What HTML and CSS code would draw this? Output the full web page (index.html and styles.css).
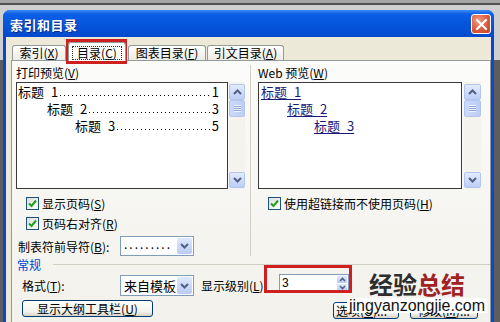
FILE: index.html
```html
<!DOCTYPE html>
<html lang="zh-CN">
<head>
  <meta charset="UTF-8" />
  <title>索引和目录</title>
  <link rel="stylesheet" href="styles.css">
</head>
<body>
  <div class="window">
    <div class="titlebar">
      <span class="title">索引和目录</span>
      <span class="close">
        <svg width="13" height="13" viewBox="0 0 13 13"><path d="M2 2 L11 11 M11 2 L2 11" stroke="#fff" stroke-width="2.2" stroke-linecap="round"/></svg>
      </span>
    </div>

    <div class="client">
      <div class="tabs">
        <div class="tab tab-index">索引(<u>X</u>)</div>
        <div class="tab tab-toc active"><span class="focus">目录(<u>C</u>)</span></div>
        <div class="tab tab-fig">图表目录(<u>F</u>)</div>
        <div class="tab tab-cite">引文目录(<u>A</u>)</div>
      </div>

      <div class="panel">
        <div class="previews">
          <div class="col col-print">
            <div class="label">打印预览(<u>V</u>)</div>
            <div class="preview-row">
              <div class="preview print-box">
                <div class="toc-line lvl1"><span>标题 1</span><span class="dots"></span><span>1</span></div>
                <div class="toc-line lvl2"><span>标题 2</span><span class="dots"></span><span>3</span></div>
                <div class="toc-line lvl3"><span>标题 3</span><span class="dots"></span><span>5</span></div>
              </div>
              <div class="scrollbar">
                <div class="sb-btn"><svg width="9" height="6" viewBox="0 0 9 6"><path d="M1 5 L4.5 1.5 L8 5" stroke="#4d6185" stroke-width="2" fill="none"/></svg></div>
                <div class="sb-thumb"></div>
                <div class="sb-track"></div>
                <div class="sb-btn"><svg width="9" height="6" viewBox="0 0 9 6"><path d="M1 1 L4.5 4.5 L8 1" stroke="#4d6185" stroke-width="2" fill="none"/></svg></div>
              </div>
            </div>
            <label class="check first"><span class="box"><svg width="9" height="9" viewBox="0 0 9 9"><path d="M1 4.5 L3.5 7 L8 1.5" stroke="#21a121" stroke-width="2" fill="none"/></svg></span>显示页码(<u>S</u>)</label>
            <label class="check"><span class="box"><svg width="9" height="9" viewBox="0 0 9 9"><path d="M1 4.5 L3.5 7 L8 1.5" stroke="#21a121" stroke-width="2" fill="none"/></svg></span>页码右对齐(<u>R</u>)</label>
            <div class="field">
              <span class="field-label">制表符前导符(<u>B</u>):</span>
              <div class="select">
                <span class="select-text leader">.........</span>
                <span class="select-btn"><svg width="9" height="6" viewBox="0 0 9 6"><path d="M1 1 L4.5 4.5 L8 1" stroke="#4d6185" stroke-width="2" fill="none"/></svg></span>
              </div>
            </div>
          </div>

          <div class="col col-web">
            <div class="label">Web 预览(<u>W</u>)</div>
            <div class="preview-row">
              <div class="preview web-box">
                <div class="web-line lvl1"><a>标题 1</a></div>
                <div class="web-line lvl2"><a>标题 2</a></div>
                <div class="web-line lvl3"><a>标题 3</a></div>
              </div>
              <div class="scrollbar wide">
                <div class="sb-btn"><svg width="9" height="6" viewBox="0 0 9 6"><path d="M1 5 L4.5 1.5 L8 5" stroke="#4d6185" stroke-width="2" fill="none"/></svg></div>
                <div class="sb-thumb"></div>
                <div class="sb-track"></div>
                <div class="sb-btn"><svg width="9" height="6" viewBox="0 0 9 6"><path d="M1 1 L4.5 4.5 L8 1" stroke="#4d6185" stroke-width="2" fill="none"/></svg></div>
              </div>
            </div>
            <label class="check first"><span class="box"><svg width="9" height="9" viewBox="0 0 9 9"><path d="M1 4.5 L3.5 7 L8 1.5" stroke="#21a121" stroke-width="2" fill="none"/></svg></span>使用超链接而不使用页码(<u>H</u>)</label>
          </div>
        </div>

        <div class="group-title"><span>常规</span><span class="rule"></span></div>

        <div class="format-row">
          <span class="format-label">格式(<u>T</u>):</span>
          <div class="select big">
            <span class="select-text">来自模板</span>
            <span class="select-btn"><svg width="9" height="6" viewBox="0 0 9 6"><path d="M1 1 L4.5 4.5 L8 1" stroke="#4d6185" stroke-width="2" fill="none"/></svg></span>
          </div>
          <span class="level-label">显示级别(<u>L</u>):</span>
          <div class="spinner">
            <span class="spin-value">3</span>
            <span class="spin-btns">
              <span class="spin-btn"><svg width="7" height="5" viewBox="0 0 7 5"><path d="M1 4 L3.5 1.5 L6 4" stroke="#4d6185" stroke-width="1.6" fill="none"/></svg></span>
              <span class="spin-btn"><svg width="7" height="5" viewBox="0 0 7 5"><path d="M1 1 L3.5 3.5 L6 1" stroke="#4d6185" stroke-width="1.6" fill="none"/></svg></span>
            </span>
          </div>
        </div>

        <div class="button-row">
          <button class="btn outline-btn">显示大纲工具栏(<u>U</u>)</button>
          <button class="btn options-btn">选项(<u>O</u>)...</button>
          <button class="btn modify-btn">修改(<u>M</u>)...</button>
        </div>
      </div>
    </div>
  </div>

  <div class="highlight hl-tab"></div>
  <div class="highlight hl-spin"></div>

  <div class="wm-cn"><span class="wm-dark">经验</span><span class="wm-red">总结</span></div>
  <div class="wm-url">jingyanzongjie.com</div>
</body>
</html>
```

FILE: styles.css
```css
* {
  box-sizing: border-box;
}

body {
  margin: 0;
  width: 500px;
  height: 322px;
  overflow: hidden;
  position: relative;
  font-family: "Noto Sans CJK SC", "Liberation Sans", sans-serif;
  font-size: 12px;
  color: #000;
  white-space: nowrap;
  background: linear-gradient(#a4a4a4 0 3px, #505050 3px 5px, #cfcfcf 5px 60px, #5d5d5d 60px);
}

u {
  text-decoration: underline;
  text-underline-offset: 1px;
}

.window {
  margin: 10px 0 0 3px;
  width: 491px;
  height: 312px;
  background: #0a46d2;
  border-radius: 7px 7px 0 0;
  display: flex;
  flex-direction: column;
}

.titlebar {
  height: 27px;
  display: flex;
  align-items: center;
  justify-content: space-between;
  padding: 1px 3px 0 7px;
  border-radius: 7px 7px 0 0;
  background: linear-gradient(#3d8cf8 0, #0c5fe6 4px, #0657dd 45%, #0449cd 100%);
}

.title {
  color: #fff;
  font-weight: bold;
  font-size: 13px;
  letter-spacing: 0.5px;
  text-shadow: 1px 1px 0 #0a2a80;
}

.close {
  width: 20px;
  height: 20px;
  border: 1px solid #fff;
  border-radius: 3px;
  background: radial-gradient(circle at 35% 30%, #f09a7c, #d8573a 60%, #c4452a);
  display: flex;
  align-items: center;
  justify-content: center;
}

.client {
  flex: 1;
  margin: 0 3px;
  background: #ece9d8;
  padding: 5px 0 0 5px;
  overflow: hidden;
}

/* tabs */
.tabs {
  display: flex;
  align-items: flex-end;
  height: 18px;
  margin-left: 1px;
  position: relative;
  z-index: 1;
}

.tab {
  height: 15px;
  line-height: 14px;
  border: 1px solid #919b9c;
  border-bottom: none;
  border-radius: 3px 3px 0 0;
  background: linear-gradient(#ffffff, #ecebe4);
  text-align: center;
  margin-right: 2px;
}

.tab-index { width: 54px; }
.tab-toc { width: 58px; }
.tab-fig { width: 78px; margin-right: 1px; }
.tab-cite { width: 77px; }

.tab.active {
  height: 19px;
  margin-bottom: -1px;
  padding-top: 3px;
  background: #fcfcfb;
}

.focus {
  display: inline-block;
  line-height: 12px;
  padding: 0 4px;
  outline: 1px dotted #333;
}

.panel {
  border: 1px solid #919b9c;
  background: linear-gradient(#fbfbf9, #f1f0ea);
  height: 300px;
  padding: 4px 0 0 4px;
}

/* previews */
.previews {
  display: flex;
}

.col-print {
  width: 234px;
}

.col-web {
  width: 238px;
  border-left: 1px solid #d3d0c3;
  padding-left: 7px;
}

.label {
  height: 16px;
  line-height: 16px;
  margin-bottom: 1px;
}

.preview-row {
  display: flex;
  height: 107px;
}

.preview {
  border: 1px solid #3a3a3a;
  background: #fff;
  font-size: 13px;
  word-spacing: 4px;
}

.print-box {
  width: 212px;
  padding: 0 8px 0 1px;
}

.web-box {
  width: 204px;
  padding-left: 2px;
}

.toc-line {
  display: flex;
  height: 17px;
  line-height: 17px;
}

.toc-line.lvl2 { padding-left: 29px; }
.toc-line.lvl3 { padding-left: 57px; }

.dots {
  flex: 1;
  margin: 0 1px 0 2px;
  background: linear-gradient(to right, #000 1px, transparent 1px) repeat-x left bottom 4px / 4px 1px;
}

.web-line {
  height: 17px;
  line-height: 17px;
}

.web-line a {
  color: #1a1a7a;
  text-decoration: underline;
  text-underline-offset: 2px;
}

.web-line.lvl2 { padding-left: 26px; }
.web-line.lvl3 { padding-left: 53px; }

.scrollbar {
  width: 16px;
  margin-left: 1px;
  display: flex;
  flex-direction: column;
  padding: 2px 0 1px;
  background: #f4f3ee;
}

.scrollbar.wide {
  width: 17px;
  margin-left: 2px;
}

.sb-btn {
  height: 16px;
  border: 1px solid #b4c5ee;
  border-radius: 2px;
  background: linear-gradient(#e3ebfd, #bccdf6);
  display: flex;
  align-items: center;
  justify-content: center;
}

.sb-thumb {
  height: 17px;
  border: 1px solid #b4c5ee;
  border-radius: 2px;
  background:
    repeating-linear-gradient(#eef3fe 0 1px, #8ea5d8 1px 2px) center / 7px 7px no-repeat,
    linear-gradient(to right, #cbd9fb, #bccdf6);
}

.sb-track {
  flex: 1;
}

/* checkboxes */
.check {
  display: flex;
  align-items: center;
  height: 20px;
  padding-left: 10px;
}

.check.first {
  margin-top: 4px;
}

.box {
  width: 13px;
  height: 13px;
  margin-right: 3px;
  border: 1px solid #1c5180;
  background: linear-gradient(135deg, #dcdcd7, #ffffff);
  display: flex;
  align-items: center;
  justify-content: center;
}

/* fields */
.field {
  display: flex;
  align-items: center;
  height: 20px;
  margin-top: 3px;
  padding-left: 2px;
}

.field-label {
  width: 102px;
}

.select {
  width: 74px;
  height: 20px;
  border: 1px solid #7f9db9;
  background: #fff;
  display: flex;
  justify-content: space-between;
  overflow: hidden;
}

.select-text {
  padding-left: 3px;
  line-height: 18px;
}

.select-text.leader {
  letter-spacing: 2px;
  line-height: 14px;
}

.select.big {
  height: 21px;
  font-size: 13px;
}

.select.big .select-text {
  line-height: 19px;
}

.select-btn {
  flex: none;
  width: 15px;
  margin: 1px;
  border-radius: 2px;
  background: linear-gradient(#dfe8fd, #b9cbf6);
  display: flex;
  align-items: center;
  justify-content: center;
}

.group-title {
  display: flex;
  align-items: center;
  height: 14px;
  margin-top: 1px;
  padding-left: 1px;
  color: #0046d5;
}

.rule {
  flex: 1;
  height: 1px;
  margin-left: 12px;
  background: #d3d0c3;
}

.format-row {
  display: flex;
  align-items: center;
  height: 21px;
  margin-top: 4px;
}

.format-label {
  width: 104px;
  padding-left: 6px;
}

.level-label {
  margin-left: 7px;
}

.spinner {
  width: 70px;
  height: 18px;
  margin: -5px 0 0 12px;
  border: 1px solid #7f9db9;
  background: #fff;
  display: flex;
  justify-content: space-between;
}

.spin-value {
  padding-left: 2px;
  line-height: 16px;
  font-family: "Liberation Sans", sans-serif;
}

.spin-btns {
  width: 12px;
  display: flex;
  flex-direction: column;
}

.spin-btn {
  flex: 1;
  margin: 1px 1px 0;
  background: linear-gradient(#dfe8fd, #b9cbf6);
  display: flex;
  align-items: center;
  justify-content: center;
}

/* buttons */
.button-row {
  display: flex;
  align-items: flex-start;
  margin-top: 4px;
}

.btn {
  height: 17px;
  padding: 0;
  border: 1px solid #003c74;
  border-radius: 3px;
  background: linear-gradient(#ffffff, #f3f2ec 70%, #d8d2c6);
  font-family: inherit;
  font-size: 12px;
  line-height: 14px;
  color: #000;
  white-space: nowrap;
}

.outline-btn {
  width: 131px;
  margin-left: 6px;
}

.options-btn {
  width: 66px;
  margin: 2px 0 0 auto;
  text-align: left;
  padding-left: 2px;
}

.modify-btn {
  width: 68px;
  margin: 2px 12px 0 11px;
}

/* overlays on the screenshot */
.highlight {
  position: absolute;
  border: 3px solid #d01f1f;
}

.hl-tab {
  left: 66px;
  top: 39px;
  width: 61px;
  height: 25px;
}

.hl-spin {
  left: 264px;
  top: 265px;
  width: 88px;
  height: 28px;
}

.wm-cn {
  position: absolute;
  left: 369px;
  top: 271px;
  font-size: 24px;
  line-height: 26px;
  font-weight: bold;
}

.wm-dark { color: #2e2e2e; }
.wm-red { color: #a02323; }

.wm-url {
  position: absolute;
  left: 347px;
  top: 298px;
  padding: 0 2px;
  background: #fff;
  font-family: "Liberation Sans", sans-serif;
  font-size: 16px;
  line-height: 15px;
  color: #111;
}
```
